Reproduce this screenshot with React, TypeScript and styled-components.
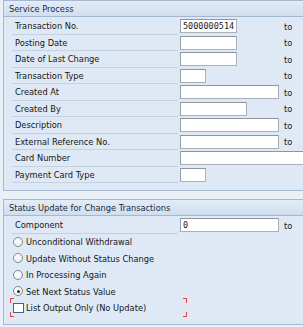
import styled, { createGlobalStyle, css } from "styled-components"

const GlobalStyle = createGlobalStyle`
    html, body {
        margin: 0;
        padding: 0;
        background: #eaf0f7;
        overflow: hidden;
    }
    body {
        font-family: "DejaVu Sans Condensed", "DejaVu Sans", sans-serif;
        font-size: 9.2px;
        color: #161616;
    }
`

const Page = styled.div`
    width: 303px;
    height: 327px;
    overflow: hidden;
`

const Panel = styled.section<{ $gap?: number }>`
    width: 330px;
    margin-left: 3px;
    margin-top: ${p => p.$gap ?? 0}px;
    border: 1px solid #a4b8d2;
    background: #dfe9f5;
`

const PanelHeader = styled.div`
    height: 15px;
    line-height: 15px;
    padding-left: 5px;
    border-bottom: 1px solid #a4b8d2;
    background: linear-gradient(#e3ecf7, #cfdeef);
    color: #1c2b3c;
`

const PanelBody = styled.div<{ $bottom: number }>`
    padding: 1px 0 ${p => p.$bottom}px 8px;
`

const FieldRow = styled.div`
    display: grid;
    grid-template-columns: 166px 101px auto;
    column-gap: 2px;
    height: 16.5px;
    align-items: center;
`

const FieldLabel = styled.div`
    height: 100%;
    box-sizing: border-box;
    padding-left: 3px;
    line-height: 15.5px;
    border-bottom: 1px solid #c3d1e2;
    white-space: nowrap;
`

const InputCell = styled.div`
    display: flex;
    align-items: center;
    min-width: 0;
`

const TextInput = styled.input<{ $w: number }>`
    box-sizing: border-box;
    flex: none;
    width: ${p => p.$w}px;
    height: 14px;
    margin: 0;
    padding: 0 2px;
    border: 1px solid #a9b0b8;
    border-top-color: #8e959e;
    border-left-color: #979ea7;
    background: #fff;
    font-family: "DejaVu Sans Mono", "Liberation Mono", monospace;
    font-size: 8.5px;
    color: #222;
    outline: none;
`

const ToText = styled.span`
    padding-left: 1px;
`

const OptionRow = styled.div`
    position: relative;
    display: flex;
    align-items: center;
    gap: 3px;
    height: 16.5px;
    padding-left: 1px;
    white-space: nowrap;
`

const RadioMark = styled.span<{ $on?: boolean }>`
    position: relative;
    width: 10px;
    height: 10px;
    box-sizing: border-box;
    border: 1px solid #80898f;
    border-radius: 50%;
    background: radial-gradient(circle at 40% 35%, #fff, #e6eaee);
    ${p => p.$on && css`
        &::after {
            content: "";
            position: absolute;
            left: 2.5px;
            top: 2.5px;
            width: 3px;
            height: 3px;
            border-radius: 50%;
            background: #2b2b2b;
        }
    `}
`

const CheckMark = styled.span`
    width: 11px;
    height: 10px;
    box-sizing: border-box;
    border: 1px solid #42618f;
    background: #fff;
    margin-right: -1px;
`

const FocusCorner = styled.span<{ $side: "l" | "r"; $edge: "t" | "b" }>`
    position: absolute;
    width: 3px;
    height: 4px;
    border-color: #e0424a;
    border-style: solid;
    border-width: 0;
    ${p => p.$side === "l" ? css`left: -2px; border-left-width: 1px;` : css`left: 171px; border-right-width: 1px;`}
    ${p => p.$edge === "t" ? css`top: -2px; border-top-width: 1px;` : css`bottom: -1px; border-bottom-width: 1px;`}
`

type Field = { label: string; w?: number; value?: string; to?: boolean }

const fields: Field[] = [
    { label: "Transaction No.", w: 57, value: "5000000514", to: true },
    { label: "Posting Date", w: 57, to: true },
    { label: "Date of Last Change", w: 57, to: true },
    { label: "Transaction Type", w: 26, to: true },
    { label: "Created At", w: 99, to: true },
    { label: "Created By", w: 67, to: true },
    { label: "Description", w: 99, to: true },
    { label: "External Reference No.", w: 99, to: true },
    { label: "Card Number", w: 160 },
    { label: "Payment Card Type", w: 26 },
]

const options = [
    { label: "Unconditional Withdrawal", on: false },
    { label: "Update Without Status Change", on: false },
    { label: "In Processing Again", on: false },
    { label: "Set Next Status Value", on: true },
]

const Row = ({ f }: { f: Field }) => (
    <FieldRow>
        <FieldLabel>{f.label}</FieldLabel>
        <InputCell>
            <TextInput $w={f.w ?? 57} defaultValue={f.value ?? ""} readOnly />
        </InputCell>
        {f.to ? <ToText>to</ToText> : <span />}
    </FieldRow>
)

const App = () => {
    return (
        <Page>
            <GlobalStyle />
            <Panel>
                <PanelHeader>Service Process</PanelHeader>
                <PanelBody $bottom={7}>
                    {fields.map(f => <Row key={f.label} f={f} />)}
                </PanelBody>
            </Panel>

            <Panel $gap={8}>
                <PanelHeader>Status Update for Change Transactions</PanelHeader>
                <PanelBody $bottom={8}>
                    <Row f={{ label: "Component", w: 99, value: "0", to: true }} />
                    {options.map(o => (
                        <OptionRow key={o.label}>
                            <RadioMark $on={o.on} />
                            {o.label}
                        </OptionRow>
                    ))}
                    <OptionRow>
                        <CheckMark />
                        List Output Only (No Update)
                        <FocusCorner $side="l" $edge="t" />
                        <FocusCorner $side="l" $edge="b" />
                        <FocusCorner $side="r" $edge="t" />
                        <FocusCorner $side="r" $edge="b" />
                    </OptionRow>
                </PanelBody>
            </Panel>
        </Page>
    )
}

export default App
